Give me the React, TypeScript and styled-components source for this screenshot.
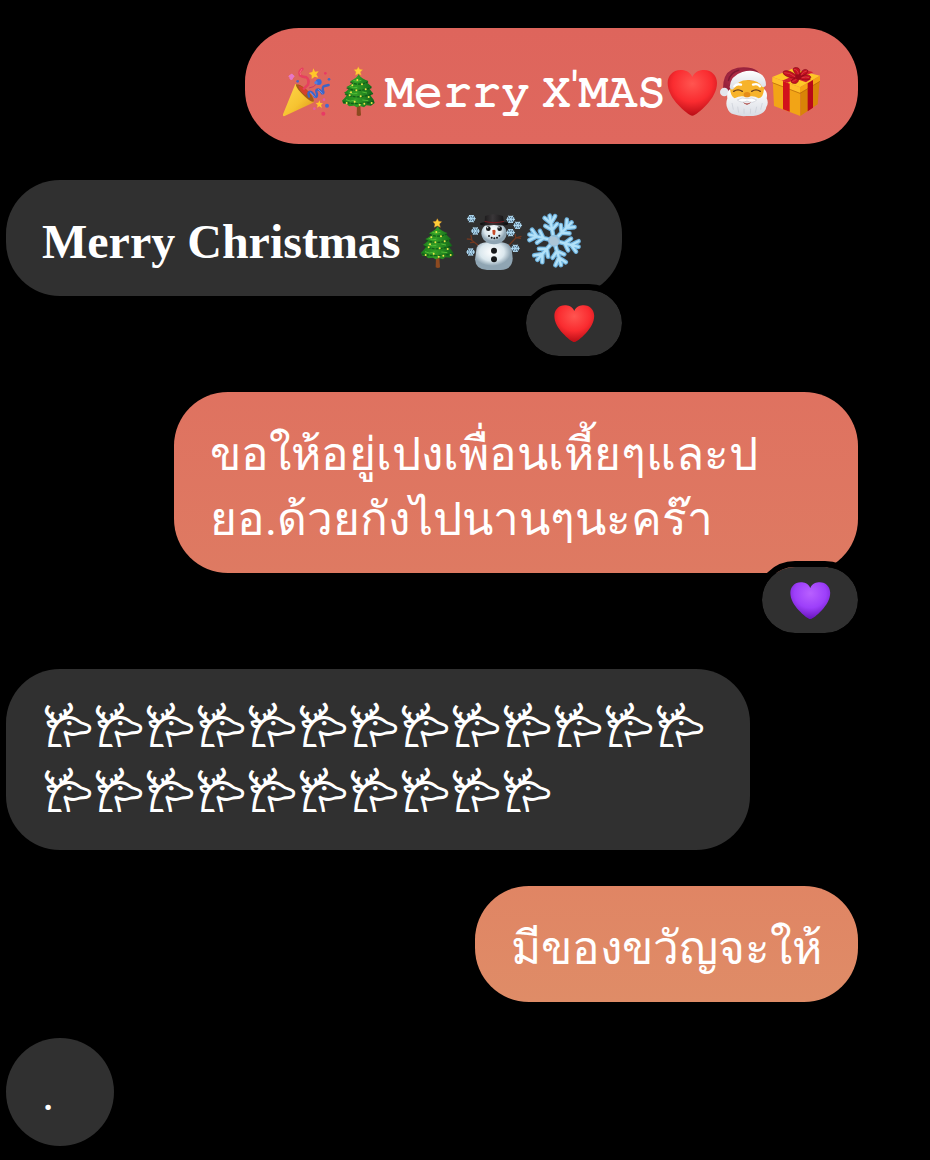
import React from "react";
import styled, { createGlobalStyle, css } from "styled-components";

const GlobalStyle = createGlobalStyle`
  html, body { margin: 0; background: #000; }
  body { font-family: Roboto, sans-serif; color: #fff; }
`;

const Thread = styled.main`
  display: flex;
  flex-direction: column;
  gap: 36px;
  padding: 28px 72px 14px 6px;
`;

const Message = styled.article<{ $mine?: boolean }>`
  display: flex;
  flex-direction: column;
  align-items: flex-end;
  align-self: ${(p) => (p.$mine ? "flex-end" : "flex-start")};
  max-width: 100%;
`;

const Bubble = styled.div<{ $from?: string; $to?: string; $width?: number; $round?: boolean }>`
  box-sizing: border-box;
  max-width: 100%;
  padding: 29px 36px 22px;
  border-radius: 54px;
  background: #303030;
  font-size: 48px;
  line-height: 65px;
  overflow-wrap: anywhere;
  ${(p) => p.$from && css`background: linear-gradient(${p.$from}, ${p.$to});`}
  ${(p) => p.$width && css`width: ${p.$width}px;`}
  ${(p) => p.$round && css`
    min-width: 108px;
    padding-top: 23px;
    padding-bottom: 20px;
  `}
`;

const Typewriter = styled.span`
  font-size: 41px;
  line-height: 1;
  -webkit-text-stroke: 2px #fff;
`;

const Serif = styled.span`
  font-family: "Liberation Serif", serif;
  font-weight: 700;
`;

const Thai = styled.span`
  font-size: 46px;
  line-height: 1;
`;

const Reaction = styled.button`
  display: flex;
  align-items: center;
  justify-content: center;
  box-sizing: content-box;
  width: 96px;
  height: 66px;
  margin: -12px -6px -6px 0;
  padding: 0;
  border: 6px solid #000;
  border-radius: 40px;
  background: #303030;
  background-clip: padding-box;
`;

const Emoji = styled.svg<{ $size: number }>`
  width: ${(p) => p.$size}px;
  height: ${(p) => p.$size}px;
  vertical-align: -12px;
`;

function Popper() {
  return (
    <Emoji $size={52} viewBox="123 138 156 156" role="img" aria-label="Party popper">
      <defs>
        <linearGradient id="cone" x1="0" x2="1" y1="0" y2="1">
          <stop offset="0" stopColor="#ffd84a" />
          <stop offset=".55" stopColor="#f6c331" />
          <stop offset="1" stopColor="#d99214" />
        </linearGradient>
      </defs>
      <path d="M165 194 Q163 190 170 193 Q207 213 222 241 Q223 248 216 250 L134 288 Q127 290 129 283Z" fill="url(#cone)" />
      <path d="M167 193 Q176 190 197 206 Q221 228 222 244 Q216 249 195 230 Q169 207 167 193Z" fill="#a45a18" />
      <path d="M175 197 Q190 198 205 216 L196 226 Q178 212 175 197Z" fill="#d63f2e" />
      <g fill="none" strokeLinecap="round" strokeLinejoin="round">
        <path d="M187 147 Q175 154 180 166 Q187 172 198 171 Q209 178 204 194 L192 206" stroke="#e6405f" strokeWidth="8" />
        <path d="M185 148 Q176 157 181 164" stroke="#f7697c" strokeWidth="3" />
        <path d="M207 230 Q202 216 210 215 Q219 216 224 230 Q232 234 231 222 Q225 208 234 208 Q242 210 246 220 Q253 222 249 211 Q246 200 254 198 L266 195" stroke="#3e64c5" strokeWidth="7" />
        <path d="M211 216 L225 232 M235 208 L247 220" stroke="#6d8de6" strokeWidth="3" />
        <path d="M208 204 Q222 204 233 188" stroke="#c93867" strokeWidth="3" />
      </g>
      <path d="m220 145 5 10 11-1-7 9 6 10-11-3-9 7 0-11-9-7 11-3Z" fill="#ffc629" />
      <path d="m238 241 3 8 8 1-6 5 3 9-8-5-7 4 2-8-6-6 8-1Z" fill="#ffc629" />
      <g fill="#e777c7"><circle cx="151" cy="169" r="5" /><circle cx="158" cy="169" r="5" /><circle cx="154" cy="175" r="5" /><circle cx="155" cy="165" r="4" /></g>
      <circle cx="236" cy="186" r="9" fill="#3d69d3" /><circle cx="228" cy="188" r="5" fill="#587fde" />
      <circle cx="261" cy="257" r="6" fill="#456ace" /><circle cx="173" cy="184" r="4" fill="#4d66be" /><circle cx="267" cy="178" r="4" fill="#4d66be" />
      <circle cx="250" cy="281" r="6" fill="#e83a65" /><circle cx="223" cy="266" r="4" fill="#e45ba4" /><circle cx="256" cy="160" r="4" fill="#e83a65" /><circle cx="252" cy="239" r="4" fill="#e45ba4" />
    </Emoji>
  );
}

function Tree() {
  const lights = [[352, 180], [337, 196], [366, 193], [349, 211], [377, 208], [329, 226], [362, 229], [386, 231], [320, 249], [344, 245], [373, 251], [395, 249], [333, 217], [359, 254]];
  return (
    <Emoji $size={52} viewBox="279 138 156 156" role="img" aria-label="Christmas tree">
      <defs>
        <linearGradient id="pine"><stop stopColor="#1c7d1d" /><stop offset=".45" stopColor="#329d25" /><stop offset="1" stopColor="#116319" /></linearGradient>
      </defs>
      <path d="M351 255 h10 l2 31 q-6 4-13 0Z" fill="#8d4a20" />
      <path d="M356 162 C351 174 339 179 330 184 L338 188 C330 196 322 199 319 201 L327 206 C320 213 315 216 312 218 L321 224 C315 234 309 238 306 242 L310 251 321 252 327 259 342 257 350 262 360 258 372 262 379 256 393 257 404 249 401 239 391 226 400 221 389 207 396 201 382 188 385 183 C372 178 361 173 356 162Z" fill="url(#pine)" />
      <path d="M331 186 Q353 199 384 186 M320 204 Q353 219 394 203 M315 222 Q350 239 398 222 M309 246 Q351 256 402 245" fill="none" stroke="#0b5316" strokeWidth="4" strokeDasharray="9 3" opacity=".8" />
      <path d="M340 181 Q351 187 364 181 M329 199 Q342 206 352 202 M326 216 Q340 225 352 220 M318 239 Q330 247 347 240 M367 216 l14 3 M367 240 l18 2" fill="none" stroke="#53bd35" strokeWidth="3" />
      {lights.map(([x, y]) => <circle key={`${x}-${y}`} cx={x} cy={y} r="3" fill="#efe64b" />)}
      <path d="m355 140 4 8 9 1-7 7 3 10-9-5-9 5 2-10-6-7 9-1Z" fill="#ffcd38" stroke="#e9992e" />
    </Emoji>
  );
}

function Heart({ size, purple = false }: { size: number; purple?: boolean }) {
  const id = purple ? "heart-purple" : `heart-red-${size}`;
  return (
    <Emoji $size={size} viewBox="348 138 156 156" role="img" aria-label={purple ? "Purple heart" : "Red heart"}>
      <defs>
        <radialGradient id={id} cx=".5" cy=".3" r=".72">
          <stop stopColor={purple ? "#b860ff" : "#ff5550"} />
          <stop offset=".55" stopColor={purple ? "#9d3ffa" : "#fa2c30"} />
          <stop offset="1" stopColor={purple ? "#6410b8" : "#b50b14"} />
        </radialGradient>
      </defs>
      <path d="M427 171 C419 154 404 150 392 150 C368 150 353 168 353 189 C353 212 366 235 385 255 C400 271 419 287 427 287 C435 287 454 271 469 255 C488 235 501 212 501 189 C501 168 486 150 462 150 C450 150 435 154 427 171Z" fill={`url(#${id})`} />
    </Emoji>
  );
}

function Santa() {
  return (
    <Emoji $size={52} viewBox="504 138 156 156" role="img" aria-label="Santa Claus">
      <defs>
        <linearGradient id="beard" x2="0" y2="1"><stop stopColor="#fff" /><stop offset="1" stopColor="#d8dce4" /></linearGradient>
        <radialGradient id="hat"><stop stopColor="#c4384e" /><stop offset="1" stopColor="#96213c" /></radialGradient>
      </defs>
      <path d="M544 188 Q550 177 588 180 Q634 180 642 201 L645 246 Q640 267 590 269 Q542 267 535 237Z" fill="#f7b32b" />
      <path d="M519 205 Q519 162 545 149 Q574 137 606 145 Q626 151 633 169 L600 174 Q565 171 547 200 L535 214Z" fill="url(#hat)" />
      <path d="M568 150 Q540 157 535 183" fill="none" stroke="#7c1933" strokeWidth="4" />
      <path d="M539 202 Q541 167 577 156 Q610 146 633 163 Q648 173 648 196 Q645 204 636 200 Q627 182 598 180 Q563 178 551 206 Q542 213 539 202Z" fill="url(#beard)" />
      <circle cx="523" cy="216" r="13" fill="#e4e5ed" />
      <path d="M540 208 Q529 216 532 235 Q526 252 532 264 Q536 279 551 283 Q569 290 590 288 Q618 290 633 281 Q647 275 649 261 Q657 248 650 235 Q654 216 642 207 Q640 233 626 235 Q608 224 591 232 Q573 224 554 235 Q542 229 540 208Z" fill="url(#beard)" />
      <path d="M562 240 Q576 230 591 236 Q606 230 620 240 Q608 252 591 243 Q575 251 562 240Z" fill="#fff" stroke="#c5c9d1" strokeWidth="2" />
      <path d="M579 246 Q591 255 603 246 Q600 253 591 254 Q582 253 579 246Z" fill="#a52f29" />
      <ellipse cx="591" cy="224" rx="10" ry="8" fill="#e68c18" />
      <path d="M551 214 Q564 205 577 214 M605 214 Q618 205 631 214" fill="none" stroke="#6c421c" strokeWidth="4" strokeLinecap="round" />
      <path d="M553 199 Q559 190 573 194 M609 194 Q624 189 630 199" fill="none" stroke="#fff" strokeWidth="7" strokeLinecap="round" />
      <path d="M546 249 l4 20 M563 260 l3 18 M582 266 v15 M602 266 l-1 15 M620 260 l-4 18 M637 249 l-5 20" stroke="#c7ccd5" strokeWidth="2" />
    </Emoji>
  );
}

function Gift() {
  return (
    <Emoji $size={52} viewBox="660 138 156 156" role="img" aria-label="Wrapped gift">
      <path d="M668 177 L751 208 V288 L672 258Z" fill="#f2a416" />
      <path d="M810 171 L751 208 V288 L803 253Z" fill="#d98308" />
      <path d="M667 171 L727 146 L810 167 L750 202Z" fill="#ffc727" />
      <path d="M667 171 L750 202 V219 L667 187Z" fill="#ffc02a" />
      <path d="M810 167 L750 202 V219 L810 183Z" fill="#f5a315" />
      <path d="M667 188 L750 220 L810 184" fill="none" stroke="#b36308" strokeWidth="2" />
      <path d="M699 183 L719 191 V275 L699 268Z" fill="#d2111c" />
      <path d="M773 190 L789 180 V263 L773 274Z" fill="#b80818" />
      <path d="M698 162 l12-6 73 22-15 9Z M770 151 l20 6-78 31-16-6Z" fill="#d4202b" />
      <path d="M729 174 C701 171 694 155 703 153 C714 149 732 158 742 170 C730 153 724 145 735 143 C749 141 753 151 748 168 C754 151 764 144 773 151 C776 160 760 167 751 170 C773 160 784 166 782 174 C774 184 755 179 746 174 C747 185 740 193 730 190 C720 188 721 180 736 174Z" fill="#c70f21" stroke="#820818" strokeWidth="2" />
      <path d="M704 158 Q719 157 735 170 M733 148 Q744 148 745 164 M754 165 Q758 155 769 153 M756 173 Q769 169 776 172 M728 184 Q735 184 741 176" fill="none" stroke="#d93a3f" strokeWidth="3" strokeLinecap="round" />
      <ellipse cx="745" cy="171" rx="9" ry="8" fill="#9d0a1a" />
    </Emoji>
  );
}

function Flake({ x, y }: { x: number; y: number }) {
  return (
    <g transform={`translate(${x} ${y})`}>
      <circle r="10" fill="#6ba3ce" opacity=".55" />
      <path d="M-12 0H12 M-6-10 6 10 M6-10-6 10 M-9-5V5 M9-5V5 M-5-9H5 M-5 9H5" stroke="#b5e0f8" strokeWidth="3" strokeLinecap="round" />
    </g>
  );
}

function Snowman() {
  return (
    <Emoji $size={60} viewBox="198 105 180 180" role="img" aria-label="Snowman">
      <defs>
        <radialGradient id="snow" cx=".45" cy=".35"><stop stopColor="#fff" /><stop offset=".65" stopColor="#dbe8ee" /><stop offset="1" stopColor="#8fa5b3" /></radialGradient>
        <linearGradient id="felt"><stop stopColor="#0c0b0c" /><stop offset=".45" stopColor="#3a3739" /><stop offset="1" stopColor="#0a090a" /></linearGradient>
      </defs>
      <g fill="none" stroke="#713820" strokeWidth="4" strokeLinecap="round">
        <path d="M243 213 L218 193 L208 192 M222 196 L219 181 M228 201 L218 203 M332 212 L353 189 L369 184 M353 189 L352 179 M356 188 L367 190" />
      </g>
      <path d="M236 218 Q244 203 265 202 H311 Q334 204 341 222 L344 250 Q344 283 308 285 H267 Q233 284 231 253Z" fill="url(#snow)" />
      <ellipse cx="288" cy="175" rx="38" ry="33" fill="url(#snow)" />
      <path d="M261 123 Q287 113 315 123 L318 142 Q334 141 330 148 Q324 154 288 150 Q249 154 246 148 Q244 143 260 141Z" fill="url(#felt)" />
      <path d="M260 138 Q288 145 318 138 v3 Q288 148 260 141Z" fill="#7b1c22" />
      <g fill="#151719"><circle cx="271" cy="161" r="7" /><circle cx="305" cy="161" r="7" /><circle cx="288" cy="227" r="9" /><circle cx="288" cy="253" r="9" /><circle cx="273" cy="183" r="3" /><circle cx="281" cy="188" r="3" /><circle cx="289" cy="190" r="3" /><circle cx="297" cy="188" r="3" /><circle cx="304" cy="182" r="3" /></g>
      <g fill="#fff"><circle cx="269" cy="158" r="2" /><circle cx="303" cy="158" r="2" /></g>
      <path d="M283 166 Q289 162 293 167 L291 179 Q287 182 284 177Z" fill="#c64c29" />
      <Flake x={220} y={131} /><Flake x={232} y={168} /><Flake x={218} y={231} />
      <Flake x={338} y={133} /><Flake x={359} y={151} /><Flake x={338} y={173} /><Flake x={352} y={220} />
    </Emoji>
  );
}

function Snowflake() {
  const arms = [-10, 44, 104, 164, 221, 284];
  return (
    <Emoji $size={60} viewBox="378 108 180 180" role="img" aria-label="Snowflake">
      {arms.map((angle) => (
        <g key={angle} transform={`translate(468 200) rotate(${angle})`} fill="none" strokeLinecap="round">
          <path d="M0 0V-76 M0-33 L-18-48 M0-33 L18-48 M0-53 L-16-72 M0-53 L16-72" stroke="#70b4df" strokeWidth="14" />
          <path d="M0 0V-76 M0-33 L-18-48 M0-33 L18-48 M0-53 L-16-72 M0-53 L16-72" stroke="#b2e1f8" strokeWidth="7" />
        </g>
      ))}
      <circle cx="468" cy="200" r="18" fill="#91bfdf" />
      <path d="M459 187 l16 3 9 13-8 12-16-2-8-13Z" fill="#abc5d7" />
    </Emoji>
  );
}

export default function App() {
  return (
    <>
      <GlobalStyle />
      <Thread>
        <Message $mine>
          <Bubble $from="#de655c" $to="#df685e">
            <Popper /><Tree /><Typewriter>𝙼𝚎𝚛𝚛𝚢</Typewriter> <Typewriter>𝚇</Typewriter>'<Typewriter>𝙼𝙰𝚂</Typewriter><Heart size={52} /><Santa /><Gift />
          </Bubble>
        </Message>
        <Message>
          <Bubble $width={616}><Serif>Merry Christmas</Serif> <Tree /><Snowman /><Snowflake /></Bubble>
          <Reaction aria-label="Red heart reaction"><Heart size={42} /></Reaction>
        </Message>
        <Message $mine>
          <Bubble $from="#df7260" $to="#de7a62" $width={684}>
            <Thai>ขอให้อยู่เปงเพื่อนเหี้ยๆและป<br />ยอ.ด้วยกังไปนานๆนะคร๊า</Thai>
          </Bubble>
          <Reaction aria-label="Purple heart reaction"><Heart size={42} purple /></Reaction>
        </Message>
        <Message>
          <Bubble $width={744}>{"𐂂".repeat(23)}</Bubble>
        </Message>
        <Message $mine>
          <Bubble $from="#e08564" $to="#df8c67"><Thai>มีของขวัญจะให้</Thai></Bubble>
        </Message>
        <Message>
          <Bubble $round>.</Bubble>
        </Message>
      </Thread>
    </>
  );
}
